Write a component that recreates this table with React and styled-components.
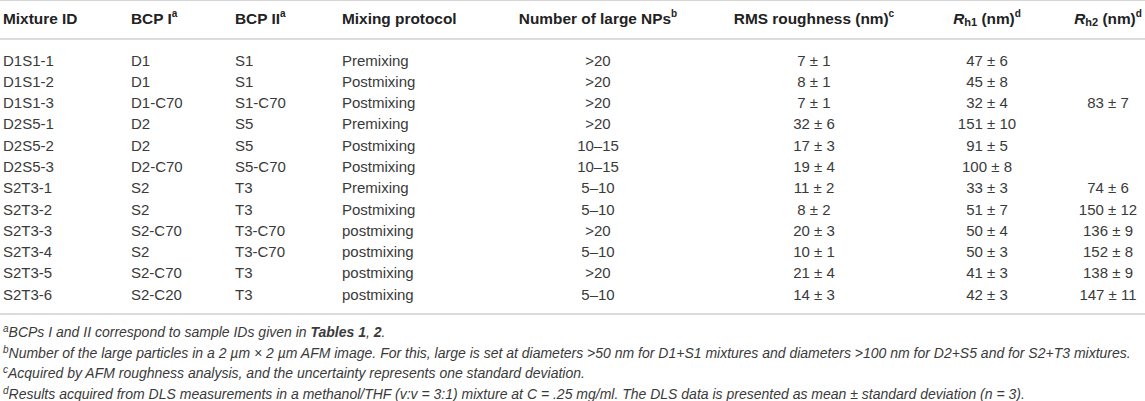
import React from 'react';
import styled, { createGlobalStyle } from 'styled-components';

const GlobalStyle = createGlobalStyle`
  html, body {
    margin: 0;
    padding: 0;
    background: #ffffff;
  }
  body {
    font-family: "Liberation Sans", Arial, Helvetica, sans-serif;
  }
`;

const Wrapper = styled.div`
  width: 1145px;
  background: #fff;
  color: #3a3a3a;
`;

const Table = styled.table`
  width: 100%;
  border-collapse: collapse;
  table-layout: fixed;
  border-top: 1px solid #d4d4d4;
  border-bottom: 2px solid #dcdcdc;
  font-size: 15px;
`;

const Head = styled.thead`
  tr {
    height: 38px;
    border-bottom: 2px solid #dcdcdc;
  }
`;

const Body = styled.tbody`
  tr:first-child td {
    padding-top: 10px;
  }
  tr:last-child td {
    padding-bottom: 8px;
  }
`;

const Th = styled.th`
  font-weight: bold;
  font-size: 15.4px;
  color: #222;
  text-align: ${p => (p.$center ? 'center' : 'left')};
  padding: 0 0 0 ${p => p.$pad || 0}px;
  white-space: nowrap;
  vertical-align: middle;
`;

const Td = styled.td`
  text-align: ${p => (p.$center ? 'center' : 'left')};
  padding: 0 0 0 ${p => p.$pad || 0}px;
  height: 21.3px;
  line-height: 21.3px;
  white-space: nowrap;
`;

const Sup = styled.sup`
  font-size: 10px;
  line-height: 0;
  vertical-align: 7px;
`;

const Sub = styled.sub`
  font-size: 11px;
  line-height: 0;
  vertical-align: -2px;
`;

const Notes = styled.div`
  padding: 7px 0 0 3px;
  font-size: 14px;
  font-style: italic;
  line-height: 20.7px;
  color: #3a3a3a;
`;

const Note = styled.div`
  white-space: nowrap;
`;

const NoteMark = styled.sup`
  font-size: 10px;
  line-height: 0;
  vertical-align: 5px;
`;

const columns = [
  { w: 131, pad: 3 },
  { w: 104 },
  { w: 107 },
  { w: 173 },
  { w: 166, center: true },
  { w: 266, center: true },
  { w: 80, center: true },
  { w: 118, center: true, pad: 44 },
];

const rows = [
  ['D1S1-1', 'D1', 'S1', 'Premixing', '>20', '7 ± 1', '47 ± 6', ''],
  ['D1S1-2', 'D1', 'S1', 'Postmixing', '>20', '8 ± 1', '45 ± 8', ''],
  ['D1S1-3', 'D1-C70', 'S1-C70', 'Postmixing', '>20', '7 ± 1', '32 ± 4', '83 ± 7'],
  ['D2S5-1', 'D2', 'S5', 'Premixing', '>20', '32 ± 6', '151 ± 10', ''],
  ['D2S5-2', 'D2', 'S5', 'Postmixing', '10–15', '17 ± 3', '91 ± 5', ''],
  ['D2S5-3', 'D2-C70', 'S5-C70', 'Postmixing', '10–15', '19 ± 4', '100 ± 8', ''],
  ['S2T3-1', 'S2', 'T3', 'Premixing', '5–10', '11 ± 2', '33 ± 3', '74 ± 6'],
  ['S2T3-2', 'S2', 'T3', 'Postmixing', '5–10', '8 ± 2', '51 ± 7', '150 ± 12'],
  ['S2T3-3', 'S2-C70', 'T3-C70', 'postmixing', '>20', '20 ± 3', '50 ± 4', '136 ± 9'],
  ['S2T3-4', 'S2', 'T3-C70', 'postmixing', '5–10', '10 ± 1', '50 ± 3', '152 ± 8'],
  ['S2T3-5', 'S2-C70', 'T3', 'postmixing', '>20', '21 ± 4', '41 ± 3', '138 ± 9'],
  ['S2T3-6', 'S2-C20', 'T3', 'postmixing', '5–10', '14 ± 3', '42 ± 3', '147 ± 11'],
];

const headers = [
  'Mixture ID',
  <>BCP I<Sup>a</Sup></>,
  <>BCP II<Sup>a</Sup></>,
  'Mixing protocol',
  <>Number of large NPs<Sup>b</Sup></>,
  <>RMS roughness (nm)<Sup>c</Sup></>,
  <><i>R</i><Sub>h1</Sub> (nm)<Sup>d</Sup></>,
  <><i>R</i><Sub>h2</Sub> (nm)<Sup>d</Sup></>,
];

export default function App() {
  return (
    <Wrapper>
      <GlobalStyle />
      <Table>
        <colgroup>
          {columns.map((c, i) => (
            <col key={i} width={c.w} />
          ))}
        </colgroup>
        <Head>
          <tr>
            {headers.map((h, i) => (
              <Th key={i} $center={columns[i].center} $pad={columns[i].pad}>
                {h}
              </Th>
            ))}
          </tr>
        </Head>
        <Body>
          {rows.map((r, ri) => (
            <tr key={ri}>
              {r.map((v, ci) => (
                <Td key={ci} $center={columns[ci].center} $pad={columns[ci].pad}>
                  {v}
                </Td>
              ))}
            </tr>
          ))}
        </Body>
      </Table>
      <Notes>
        <Note>
          <NoteMark>a</NoteMark>BCPs I and II correspond to sample IDs given in <b>Tables 1</b>, <b>2</b>.
        </Note>
        <Note>
          <NoteMark>b</NoteMark>Number of the large particles in a 2 µm × 2 µm AFM image. For this, large is set at diameters &gt;50 nm for D1+S1 mixtures and diameters &gt;100 nm for D2+S5 and for S2+T3 mixtures.
        </Note>
        <Note>
          <NoteMark>c</NoteMark>Acquired by AFM roughness analysis, and the uncertainty represents one standard deviation.
        </Note>
        <Note>
          <NoteMark>d</NoteMark>Results acquired from DLS measurements in a methanol/THF (v:v = 3:1) mixture at C = .25 mg/ml. The DLS data is presented as mean ± standard deviation (n = 3).
        </Note>
      </Notes>
    </Wrapper>
  );
}
